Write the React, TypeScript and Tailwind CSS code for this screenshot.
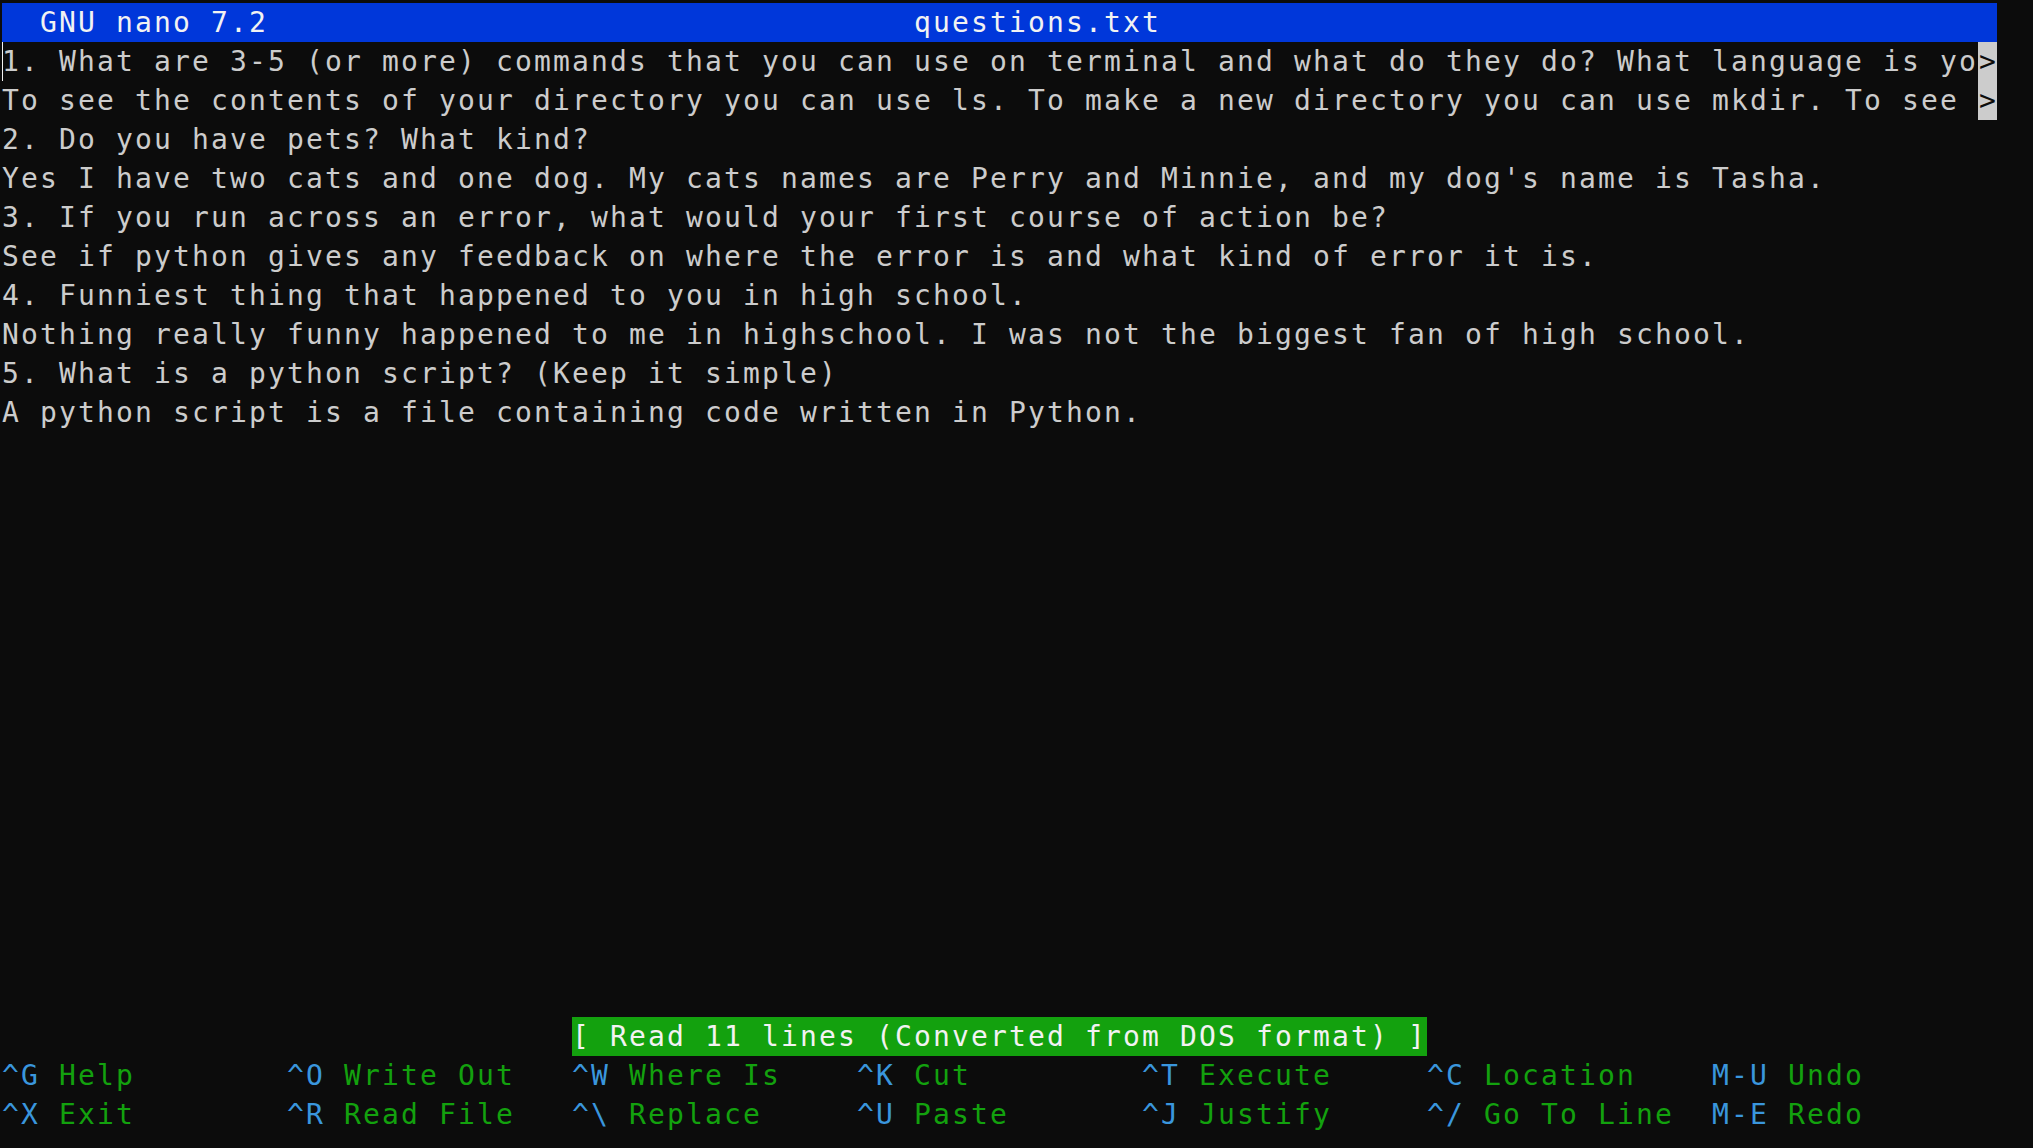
import React from "react";

const lines: string[] = [
  "1. What are 3-5 (or more) commands that you can use on terminal and what do they do? What language is yo",
  "To see the contents of your directory you can use ls. To make a new directory you can use mkdir. To see ",
  "2. Do you have pets? What kind?",
  "Yes I have two cats and one dog. My cats names are Perry and Minnie, and my dog's name is Tasha.",
  "3. If you run across an error, what would your first course of action be?",
  "See if python gives any feedback on where the error is and what kind of error it is.",
  "4. Funniest thing that happened to you in high school.",
  "Nothing really funny happened to me in highschool. I was not the biggest fan of high school.",
  "5. What is a python script? (Keep it simple)",
  "A python script is a file containing code written in Python.",
];

const row1: [string, string][] = [
  ["^G", "Help"],
  ["^O", "Write Out"],
  ["^W", "Where Is"],
  ["^K", "Cut"],
  ["^T", "Execute"],
  ["^C", "Location"],
  ["M-U", "Undo"],
];
const row2: [string, string][] = [
  ["^X", "Exit"],
  ["^R", "Read File"],
  ["^\\", "Replace"],
  ["^U", "Paste"],
  ["^J", "Justify"],
  ["^/", "Go To Line"],
  ["M-E", "Redo"],
];

function ShortcutRow({ items }: { items: [string, string][] }) {
  return (
    <div className="grid h-[39px] grid-cols-[repeat(7,285px)] leading-[39px]">
      {items.map(([k, l]) => (
        <div key={k} className="whitespace-pre">
          <span className="text-[#3a96dd]">{k}</span>
          <span className="text-[#13a10e]">{" " + l}</span>
        </div>
      ))}
    </div>
  );
}

export default function App() {
  return (
    <div
      className="relative h-[1148px] w-[2033px] overflow-hidden bg-[#0c0c0c] pl-[2px] pt-[3px] text-[28px] tracking-[2.143px] text-[#cccccc]"
      style={{ fontFamily: '"DejaVu Sans Mono", "Liberation Mono", monospace' }}
    >
      <div className="flex w-[1995px] flex-col">
        <div className="h-[39px] whitespace-pre bg-[#0037da] leading-[39px] text-[#f2f2f2]">
          {"  GNU nano 7.2".padEnd(48) + "questions.txt"}
        </div>
        {lines.map((t, i) => (
          <div key={i} className="relative flex h-[39px] whitespace-pre leading-[39px]">
            {i === 0 && (
              <span className="absolute left-0 top-0 h-[39px] w-[1px] bg-[#f2f2f2]" />
            )}
            <span>{t}</span>
            {i < 2 && (
              <span className="flex h-[39px] w-[19px] items-center justify-center bg-[#cccccc] tracking-normal text-[#0c0c0c]">
                &gt;
              </span>
            )}
          </div>
        ))}
        <div className="h-[585px]" />
        <div className="h-[39px] whitespace-pre leading-[39px]">
          <span className="ml-[570px] inline-block h-[39px] bg-[#13a10e] text-[#f2f2f2]">
            [ Read 11 lines (Converted from DOS format) ]
          </span>
        </div>
        <ShortcutRow items={row1} />
        <ShortcutRow items={row2} />
      </div>
    </div>
  );
}
